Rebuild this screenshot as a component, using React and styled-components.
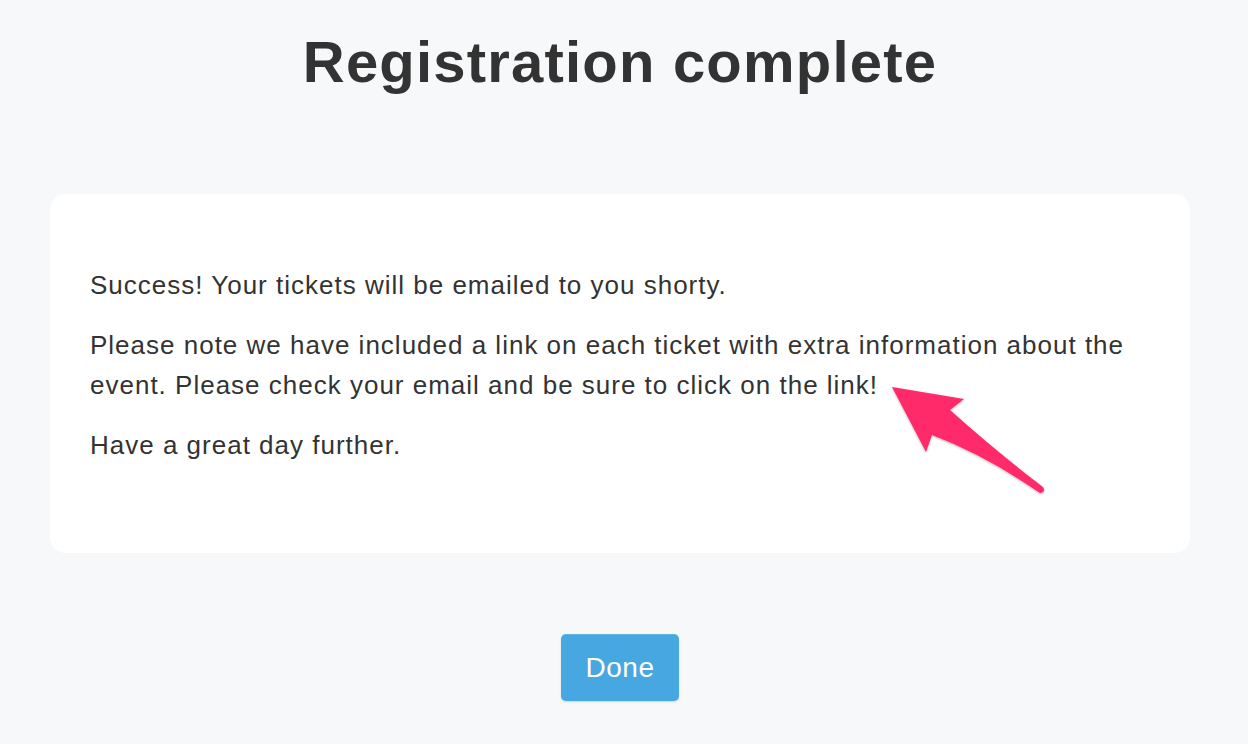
import React from 'react';
import styled, { createGlobalStyle } from 'styled-components';

const GlobalStyle = createGlobalStyle`
  html, body {
    margin: 0;
    padding: 0;
    background: #f7f8fa;
  }
  body {
    font-family: "Liberation Sans", Arial, Helvetica, sans-serif;
    color: #333333;
  }
`;

const Page = styled.div`
  width: 1240px;
  min-height: 744px;
  display: flex;
  flex-direction: column;
  align-items: center;
`;

const Heading = styled.h1`
  margin: 33px 0 0;
  font-size: 58px;
  line-height: 1;
  font-weight: 700;
  color: #333333;
  letter-spacing: 1.2px;
`;

const Card = styled.div`
  position: relative;
  box-sizing: border-box;
  margin-top: 103px;
  width: 1140px;
  height: 359px;
  padding: 71px 40px 0;
  background: #ffffff;
  border-radius: 16px;
`;

const Text = styled.p`
  margin: 0 0 20px;
  font-size: 26px;
  line-height: 40px;
  letter-spacing: 1px;
  color: #333333;
`;

const Arrow = styled.svg`
  position: absolute;
  left: 0;
  top: 0;
  overflow: visible;
  pointer-events: none;
`;

const Button = styled.button`
  margin-top: 81px;
  width: 118px;
  height: 67px;
  border: none;
  border-radius: 5px;
  background: #47a8e1;
  color: #ffffff;
  font-family: "Liberation Sans", Arial, Helvetica, sans-serif;
  font-size: 28px;
  letter-spacing: 0.5px;
  box-shadow: 0 1px 2px rgba(0, 0, 0, 0.15), inset 0 1px 0 rgba(255, 255, 255, 0.15);
  cursor: pointer;
`;

const App = () => (
  <Page>
    <GlobalStyle />
    <Heading>Registration complete</Heading>
    <Card>
      <Text>Success! Your tickets will be emailed to you shorty.</Text>
      <Text>
        Please note we have included a link on each ticket with extra information about the
        event. Please check your email and be sure to click on the link!
      </Text>
      <Text>Have a great day further.</Text>
      <Arrow width="1140" height="359" viewBox="0 0 1140 359">
        <defs>
          <filter id="arrowShadow" x="-20%" y="-20%" width="140%" height="140%">
            <feDropShadow dx="0" dy="1" stdDeviation="1.2" floodColor="#000" floodOpacity="0.3" />
          </filter>
        </defs>
        <g transform="translate(-50 -194)" filter="url(#arrowShadow)">
          <path
            d="M892 387 L964 399 L950 410 Q997 452 1043 487 Q1046 492 1040 493 Q985 455 932 435 L926 452 Z"
            fill="#ff2a6a"
          />
        </g>
      </Arrow>
    </Card>
    <Button>Done</Button>
  </Page>
);

export default App;
